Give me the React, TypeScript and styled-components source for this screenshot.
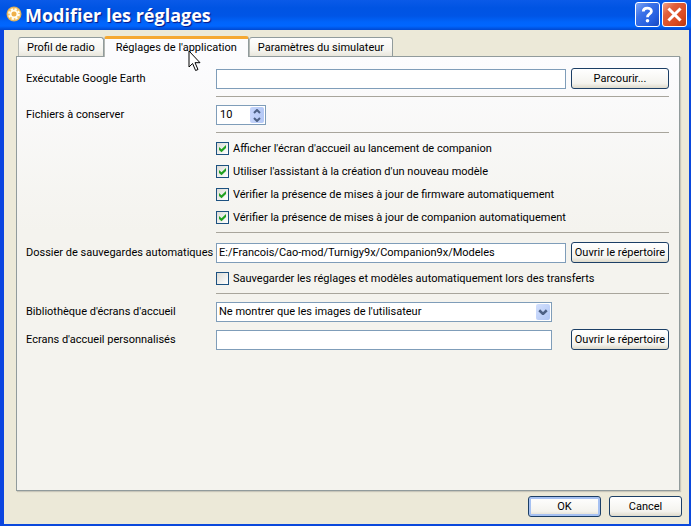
import React, { useState } from "react";
import styled, { createGlobalStyle, css } from "styled-components";

const GlobalStyle = createGlobalStyle`
  * { box-sizing: border-box; }
  body { margin: 0; background: #ece9d8; }
  body, button, input, select {
    font-family: Roboto, "Liberation Sans", sans-serif;
    font-size: 11px;
    line-height: 14px;
    color: #000;
  }
`;

const Dialog = styled.div`
  display: flex;
  flex-direction: column;
  min-height: 100vh;
  background: #ece9d8;
  border: solid #0a48dc;
  border-width: 0 2px 2px 4px;
  border-left-color: #0c45e0;
`;

const TitleBar = styled.header`
  display: flex;
  align-items: center;
  gap: 2px;
  height: 30px;
  margin: 0 -2px 0 -4px;
  padding: 0 4px 2px 6px;
  background: linear-gradient(#0a5ae8 0, #0054e3 8px, #0055e6 16px, #0064fb 22px, #0066ff 26px, #0048d0 30px);
`;

const Title = styled.h1`
  flex: 1;
  margin: 0 0 0 1px;
  padding-top: 2px;
  font-family: "Open Sans", "Noto Sans", sans-serif;
  font-size: 18px;
  line-height: 26px;
  font-weight: 700;
  color: #fff;
  text-shadow: 1px 1px 1px #0a1883;
  white-space: nowrap;
`;

const CaptionButton = styled.button<{ $close?: boolean }>`
  width: 25px;
  height: 25px;
  padding: 0;
  border: 1px solid #fff;
  border-radius: 3px;
  background: ${(p) =>
    p.$close
      ? "linear-gradient(135deg, #f0a58c 0, #e2603c 30%, #d84a20 70%, #b83810 100%)"
      : "linear-gradient(135deg, #7fa6f5 0, #3c72e8 35%, #2660e0 70%, #1848c0 100%)"};
  svg { display: block; margin: auto; }
`;

const Body = styled.main`
  flex: 1;
  display: flex;
  flex-direction: column;
  padding: 6px 8px 7px 12px;
`;

const Tabs = styled.div`
  display: flex;
  align-items: flex-end;
  height: 21px;
  margin-bottom: -1px;
  padding-left: 2px;
`;

const Tab = styled.button<{ $selected?: boolean }>`
  height: 19px;
  margin-bottom: 1px;
  padding: 2px 8px 0;
  border: 1px solid #919b9c;
  border-bottom: 0;
  border-left-color: #b4b8b4;
  border-radius: 3px 3px 0 0;
  background: linear-gradient(#fefefe, #f4f3ee 70%, #e8e6dc);
  white-space: nowrap;
  ${(p) =>
    p.$selected &&
    css`
      height: 21px;
      margin-bottom: 0;
      padding: 0 11px;
      border-top: 3px solid #f5a832;
      background: #fcfcfe;
      position: relative;
    `}
`;

const Pane = styled.section`
  flex: 1;
  margin-right: 1px;
  padding: 11px 10px 11px 9px;
  border: 1px solid #919b9c;
  background: linear-gradient(#fcfcfe 0, #f4f3ee 40%, #f4f3ee 100%);
  box-shadow: 1px 1px 1px #c8c6ba;
`;

const Row = styled.div`
  display: grid;
  grid-template-columns: 185px minmax(0, 1fr) 98px;
  align-items: center;
  column-gap: 5px;
  white-space: nowrap;
`;

const Rule = styled.hr`
  height: 1px;
  margin: 7px 0 8px 190px;
  border: 0;
  background: #a8a59c;
`;

const Group = styled.div`
  display: grid;
  gap: 9px;
  padding: 1px 0;
`;

const SplashGroup = styled.div`
  display: grid;
  gap: 7px;
`;

const CheckList = styled.div`
  display: grid;
  gap: 10px;
  margin-left: 190px;
  padding: 1px 0;
`;

const field = css`
  height: 20px;
  border: 1px solid #7f9db9;
  border-radius: 0;
  background: #fff;
  outline: 0;
`;

const TextInput = styled.input<{ $short?: boolean }>`
  ${field}
  width: auto;
  min-width: 0;
  justify-self: stretch;
  margin-right: ${(p) => (p.$short ? "14px" : "0")};
  padding: 0 2px;
`;

const Spin = styled.div`
  ${field}
  display: flex;
  align-items: center;
  width: 50px;
  padding: 1px;
`;

const SpinInput = styled.input`
  flex: 1;
  min-width: 0;
  padding: 0 0 0 2px;
  border: 0;
  outline: 0;
  appearance: textfield;
  &::-webkit-inner-spin-button { appearance: none; margin: 0; }
`;

const Steps = styled.div`
  display: grid;
  width: 14px;
  height: 16px;
  border-radius: 2px;
  background: linear-gradient(90deg, #c6d5fb, #b4c8f5);
`;

const Step = styled.button`
  display: grid;
  place-items: center;
  padding: 0;
  border: 0;
  background: none;
`;

const Combo = styled.div`
  ${field}
  display: grid;
  margin-right: 14px;
  > * { grid-area: 1 / 1; }
`;

const Select = styled.select`
  height: 18px;
  padding: 0 20px 0 2px;
  border: 0;
  outline: 0;
  background: none;
  appearance: none;
`;

const ComboArrow = styled.span`
  display: grid;
  place-items: center;
  justify-self: end;
  width: 14px;
  height: 16px;
  margin: 1px;
  border-radius: 2px;
  background: linear-gradient(135deg, #d3e0fd, #b0c6f5);
  pointer-events: none;
`;

const PushButton = styled.button<{ $default?: boolean }>`
  height: 21px;
  padding: 0;
  border: 1px solid #1c3f66;
  border-radius: 3px;
  background: linear-gradient(#fff, #f4f3ee 75%, #dedacb);
  box-shadow: ${(p) => (p.$default ? "inset 0 0 0 2px #a6c1f2" : "none")};
  white-space: nowrap;
`;

const CheckLabel = styled.label`
  display: flex;
  align-items: center;
  gap: 4px;
  height: 13px;
  white-space: nowrap;
`;

const CheckBox = styled.span`
  display: grid;
  width: 13px;
  height: 13px;
  > * { grid-area: 1 / 1; }
  svg { place-self: center; pointer-events: none; visibility: hidden; }
  input:checked + svg { visibility: visible; }
`;

const CheckInput = styled.input`
  width: 13px;
  height: 13px;
  margin: 0;
  appearance: none;
  border: 1px solid #1c5180;
  background: linear-gradient(135deg, #dcdcd7, #fff);
`;

const Indent = styled.div`
  margin-left: 190px;
`;

const Footer = styled.footer`
  display: grid;
  grid-template-columns: 73px 73px;
  justify-content: end;
  gap: 8px;
  padding: 5px 0 0;
  margin-right: -1px;
`;

const Pointer = styled.svg`
  position: absolute;
  left: 83px;
  top: 11px;
  z-index: 1;
  pointer-events: none;
`;

const Gear = () => (
  <svg width="16" height="16" viewBox="0 0 16 16" aria-hidden="true">
    <circle cx="8" cy="8" r="7.5" fill="#dcae5a" />
    <circle cx="8" cy="8" r="6.6" fill="#f5c468" />
    <circle cx="8" cy="8" r="4.9" fill="none" stroke="#fffdf2" strokeWidth="2" strokeDasharray="2.2 1.65" />
    <circle cx="8" cy="8" r="3.4" fill="#efb04a" stroke="#fffdf2" strokeWidth="1.8" />
  </svg>
);

const Check = ({ label, defaultChecked }: { label: string; defaultChecked?: boolean }) => (
  <CheckLabel>
    <CheckBox>
      <CheckInput type="checkbox" defaultChecked={defaultChecked} />
      <svg width="9" height="9" viewBox="0 0 9 9" aria-hidden="true">
        <path d="M1 3v3l2.5 2.3L8 4V1L3.5 5.3z" fill="#21a121" />
      </svg>
    </CheckBox>
    {label}
  </CheckLabel>
);

const Chevron = ({ up, size = 8 }: { up?: boolean; size?: number }) => (
  <svg width={size} height={size * 0.625} viewBox="0 0 8 5" aria-hidden="true">
    <path d={up ? "M1 4l3-3 3 3" : "M1 1l3 3 3-3"} fill="none" stroke="#4d6185" strokeWidth="2" />
  </svg>
);

export default function App() {
  const [files, setFiles] = useState(10);
  return (
    <>
      <GlobalStyle />
      <Dialog>
        <TitleBar>
          <Gear />
          <Title>Modifier les réglages</Title>
          <CaptionButton aria-label="Aide">
            <svg width="17" height="19" viewBox="0 0 17 19">
              <path d="M4.3 6.4C4.3 2 12.4 2 12.4 6.2C12.4 9 8.5 8.9 8.5 12.2" fill="none" stroke="#fff" strokeWidth="2.8" />
              <circle cx="8.5" cy="15.7" r="1.8" fill="#fff" />
            </svg>
          </CaptionButton>
          <CaptionButton $close aria-label="Fermer">
            <svg width="17" height="17" viewBox="0 0 17 17">
              <path d="M3.5 3.5l10 10M13.5 3.5l-10 10" stroke="#fff" strokeWidth="3" strokeLinecap="square" />
            </svg>
          </CaptionButton>
        </TitleBar>
        <Body>
          <Tabs role="tablist">
            <Tab role="tab">Profil de radio</Tab>
            <Tab role="tab" $selected aria-selected="true">
              Réglages de l'application
              <Pointer width="13" height="22" viewBox="0 0 13 22" aria-hidden="true">
                <path d="M1 1v16l3.6-3.5 3 7 2.4-1-3-6.8h5z" fill="#fff" stroke="#000" />
              </Pointer>
            </Tab>
            <Tab role="tab">Paramètres du simulateur</Tab>
          </Tabs>
          <Pane role="tabpanel">
            <Row>
              <label htmlFor="earth">Exécutable Google Earth</label>
              <TextInput id="earth" />
              <PushButton>Parcourir...</PushButton>
            </Row>
            <Rule />
            <Row>
              <label htmlFor="files">Fichiers à conserver</label>
              <Spin>
                <SpinInput
                  id="files"
                  type="number"
                  value={files}
                  onChange={(e) => setFiles(Number(e.target.value))}
                />
                <Steps>
                  <Step aria-label="Augmenter" onClick={() => setFiles(files + 1)}><Chevron up /></Step>
                  <Step aria-label="Diminuer" onClick={() => setFiles(files - 1)}><Chevron /></Step>
                </Steps>
              </Spin>
            </Row>
            <Rule />
            <CheckList>
              <Check defaultChecked label="Afficher l'écran d'accueil au lancement de companion" />
              <Check defaultChecked label="Utiliser l'assistant à la création d'un nouveau modèle" />
              <Check defaultChecked label="Vérifier la présence de mises à jour de firmware automatiquement" />
              <Check defaultChecked label="Vérifier la présence de mises à jour de companion automatiquement" />
            </CheckList>
            <Rule />
            <Group>
              <Row>
                <label htmlFor="backup">Dossier de sauvegardes automatiques</label>
                <TextInput id="backup" defaultValue="E:/Francois/Cao-mod/Turnigy9x/Companion9x/Modeles" />
                <PushButton>Ouvrir le répertoire</PushButton>
              </Row>
              <Indent>
                <Check label="Sauvegarder les réglages et modèles automatiquement lors des transferts" />
              </Indent>
            </Group>
            <Rule />
            <SplashGroup>
              <Row>
                <label htmlFor="library">Bibliothèque d'écrans d'accueil</label>
                <Combo>
                  <Select id="library">
                    <option>Ne montrer que les images de l'utilisateur</option>
                  </Select>
                  <ComboArrow><Chevron size={10} /></ComboArrow>
                </Combo>
              </Row>
              <Row>
                <label htmlFor="splash">Ecrans d'accueil personnalisés</label>
                <TextInput id="splash" $short />
                <PushButton>Ouvrir le répertoire</PushButton>
              </Row>
            </SplashGroup>
          </Pane>
          <Footer>
            <PushButton $default>OK</PushButton>
            <PushButton>Cancel</PushButton>
          </Footer>
        </Body>
      </Dialog>
    </>
  );
}
